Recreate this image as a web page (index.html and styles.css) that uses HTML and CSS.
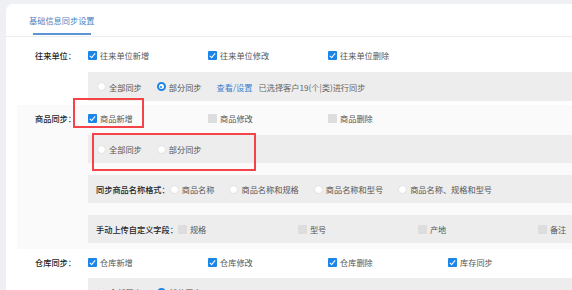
FILE: index.html
```html
<!DOCTYPE html>
<html lang="zh-CN">
<head>
    <meta charset="UTF-8">
    <meta name="viewport" content="width=device-width, initial-scale=1.0">
    <title>基础信息同步设置</title>
    <link rel="stylesheet" href="styles.css">
</head>
<body>
    <div class="page">
        <div class="card">
            <div class="tabs">
                <span class="tab active">基础信息同步设置</span>
            </div>

            <div class="section first">
                <div class="row">
                    <span class="label">往来单位：</span>
                    <span class="opt"><i class="cb on"></i>往来单位新增</span>
                    <span class="opt"><i class="cb on"></i>往来单位修改</span>
                    <span class="opt"><i class="cb on"></i>往来单位删除</span>
                </div>
                <div class="sub">
                    <span class="radio"><i class="rd"></i>全部同步</span>
                    <span class="radio"><i class="rd on"></i>部分同步</span>
                    <a class="link" href="#">查看/设置</a>
                    <span class="note">已选择客户19(个|类)进行同步</span>
                </div>
            </div>

            <div class="section band">
                <div class="row">
                    <span class="label">商品同步：</span>
                    <span class="opt"><i class="cb on"></i>商品新增</span>
                    <span class="opt"><i class="cb off"></i>商品修改</span>
                    <span class="opt"><i class="cb off"></i>商品删除</span>
                </div>
                <div class="sub">
                    <span class="radio"><i class="rd"></i>全部同步</span>
                    <span class="radio"><i class="rd"></i>部分同步</span>
                </div>
                <div class="sub gap field">
                    <span class="sub-label">同步商品名称格式：</span>
                    <span class="radio"><i class="rd"></i>商品名称</span>
                    <span class="radio"><i class="rd"></i>商品名称和规格</span>
                    <span class="radio"><i class="rd"></i>商品名称和型号</span>
                    <span class="radio"><i class="rd"></i>商品名称、规格和型号</span>
                </div>
                <div class="sub gap field">
                    <span class="sub-label">手动上传自定义字段：</span>
                    <span class="opt"><i class="cb off"></i>规格</span>
                    <span class="opt"><i class="cb off"></i>型号</span>
                    <span class="opt"><i class="cb off"></i>产地</span>
                    <span class="opt"><i class="cb off"></i>备注</span>
                </div>
            </div>

            <div class="section">
                <div class="row">
                    <span class="label">仓库同步：</span>
                    <span class="opt"><i class="cb on"></i>仓库新增</span>
                    <span class="opt"><i class="cb on"></i>仓库修改</span>
                    <span class="opt"><i class="cb on"></i>仓库删除</span>
                    <span class="opt"><i class="cb on"></i>库存同步</span>
                </div>
                <div class="sub last">
                    <span class="radio"><i class="rd"></i>全部同步</span>
                    <span class="radio"><i class="rd on"></i>部分同步</span>
                </div>
            </div>
        </div>

        <div class="mark mark-add"></div>
        <div class="mark mark-sync"></div>
    </div>
</body>
</html>
```

FILE: styles.css
```css
html, body {
    margin: 0;
    padding: 0;
    overflow: hidden;
}
body {
    font-family: "Noto Sans CJK SC", "Noto Sans", sans-serif;
    font-size: 8.2px;
    color: #555;
    background-color: #eef0f3;
}
.page {
    position: relative;
    padding: 4px 0 0 6px;
    height: 290px;
}
.card {
    width: 640px;
    height: 320px;
    background: white;
    border-radius: 7px 0 0 0;
}
.tabs {
    height: 32px;
    border-bottom: 1px solid #ececec;
    padding-left: 19px;
}
.tab {
    position: relative;
    display: inline-block;
    line-height: 32px;
    padding: 0 4px;
    color: #4a82c3;
}
.tab.active::after {
    content: "";
    position: absolute;
    left: 8px;
    right: 8px;
    bottom: 1px;
    height: 2px;
    background: #5b95d4;
}
.section {
    margin-left: 11px;
    padding: 0 0 4px 18px;
}
.section.first {
    padding-top: 5px;
}
.band {
    background: #fafafa;
    padding-bottom: 6px;
}
.row {
    display: flex;
    align-items: center;
    height: 26px;
    white-space: nowrap;
}
.label {
    width: 53px;
    flex: none;
    color: #1f1f1f;
    font-weight: 500;
}
.opt {
    display: flex;
    align-items: center;
    width: 120px;
    flex: none;
    white-space: nowrap;
}
.sub {
    display: flex;
    align-items: center;
    height: 28px;
    margin: 4px 0 0 53px;
    padding-left: 9px;
    background: #ededed;
    white-space: nowrap;
}
.sub.gap {
    margin-top: 12px;
}
.sub.field {
    padding-left: 8px;
}
.section.first .sub {
    height: 29px;
}
.sub.last {
    margin-top: 3px;
}
.sub-label {
    flex: none;
    color: #1f1f1f;
    font-weight: 500;
}
.radio {
    display: flex;
    align-items: center;
    flex: none;
    margin-right: 15px;
}
.cb, .rd {
    display: inline-block;
    position: relative;
    width: 9px;
    height: 9px;
    margin-right: 3px;
    box-sizing: border-box;
    flex: none;
}
.cb {
    border-radius: 1px;
}
.cb.on {
    background: #1b86e8;
}
.cb.on::after {
    content: "";
    position: absolute;
    left: 3px;
    top: 1px;
    width: 2px;
    height: 5px;
    border: solid white;
    border-width: 0 1.5px 1.5px 0;
    transform: rotate(40deg);
}
.cb.off {
    background: #dddddd;
}
.rd {
    border-radius: 50%;
    background: white;
    border: 1px solid #e2e2e2;
}
.rd.on {
    border: 2px solid #1b86e8;
}
.rd.on::after {
    content: "";
    position: absolute;
    left: 1.5px;
    top: 1.5px;
    width: 2px;
    height: 2px;
    border-radius: 50%;
    background: #1b86e8;
}
.link {
    color: #3d82cf;
    text-decoration: none;
    margin-right: 6px;
}
.note {
    color: #666;
}
.mark {
    position: absolute;
    border: 2px solid #f5434a;
    box-sizing: border-box;
}
.mark-add {
    left: 73px;
    top: 98px;
    width: 71px;
    height: 30px;
}
.mark-sync {
    left: 92px;
    top: 133px;
    width: 164px;
    height: 38px;
}
```
